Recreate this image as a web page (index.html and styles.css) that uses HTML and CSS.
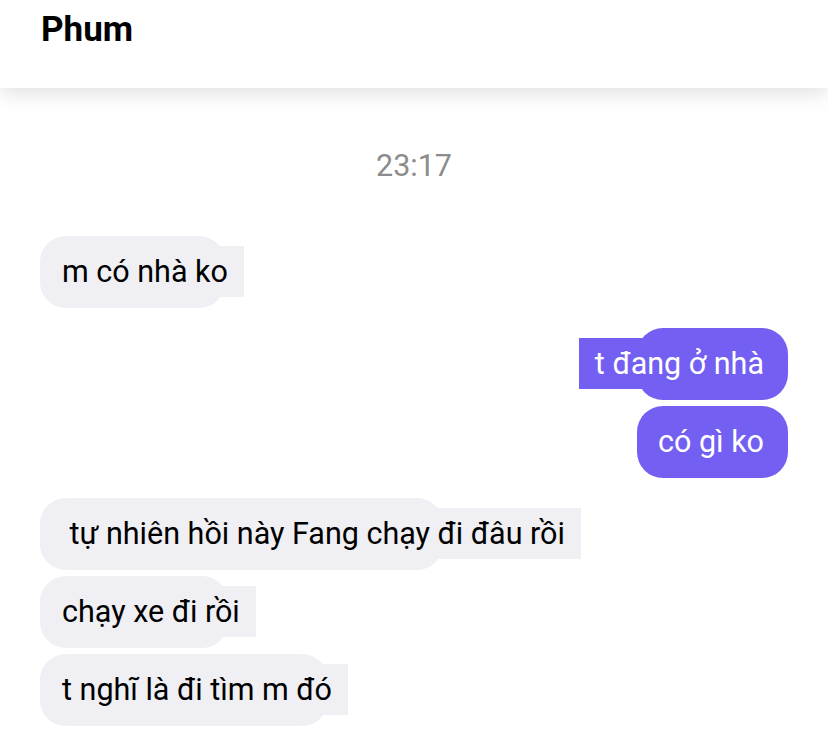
FILE: index.html
```html
<!DOCTYPE html>
<html lang="vi">
<head>
<meta charset="utf-8">
<title>Phum</title>
<link rel="stylesheet" href="styles.css">
</head>
<body>
<header class="topbar">
  <h1 class="title">Phum</h1>
</header>
<main class="chat">
  <div class="stamp">23:17</div>

  <div class="group incoming">
    <div class="bubble w185"><span class="txt">m có nhà ko</span></div>
  </div>

  <div class="group outgoing">
    <div class="bubble w151"><span class="txt">t đang ở nhà</span></div>
    <div class="bubble w151"><span class="txt">có gì ko</span></div>
  </div>

  <div class="group incoming">
    <div class="bubble w403"><span class="txt">&nbsp;tự nhiên hồi này Fang chạy đi đâu rồi</span></div>
    <div class="bubble w188"><span class="txt">chạy xe đi rồi</span></div>
    <div class="bubble w288"><span class="txt">t nghĩ là đi tìm m đó</span></div>
  </div>
</main>
</body>
</html>
```

FILE: styles.css
```css
* { box-sizing: border-box; }

html, body {
  margin: 0;
  padding: 0;
  background: #ffffff;
}

body {
  font-family: Roboto, "Noto Sans", "Liberation Sans", sans-serif;
  width: 828px;
  height: 748px;
  overflow: hidden;
}

.topbar {
  height: 88px;
  background: #ffffff;
  padding-left: 41px;
  box-shadow: 0 7px 18px rgba(0, 0, 0, 0.11);
  position: relative;
  z-index: 1;
  display: flex;
  align-items: flex-start;
}

.title {
  margin: 10px 0 0 0;
  font-family: Roboto, "Noto Sans", sans-serif;
  font-weight: 700;
  font-size: 35px;
  line-height: 40px;
  color: #000000;
}

.chat {
  padding: 0 40px;
  display: flex;
  flex-direction: column;
}

.stamp {
  margin-top: 60px;
  margin-bottom: 52px;
  text-align: center;
  font-size: 30.5px;
  line-height: 36px;
  color: #8c8c8c;
}

.group {
  display: flex;
  flex-direction: column;
  gap: 6px;
  margin-bottom: 20px;
}

.group.incoming { align-items: flex-start; }
.group.outgoing { align-items: flex-end; }

.bubble {
  height: 72px;
  border-radius: 26px;
  display: flex;
  align-items: center;
  flex-shrink: 0;
}

.txt {
  flex-shrink: 0;
  white-space: nowrap;
  height: 51px;
  line-height: 51px;
  padding: 0 16px;
  font-size: 30.5px;
  margin-top: -1px;
}

.incoming .bubble {
  background: #efeff4;
  justify-content: flex-start;
  padding-left: 6px;
}
.incoming .txt {
  background: #efeff4;
  color: #000000;
}

.outgoing .bubble {
  background: #7360f2;
  justify-content: flex-end;
  padding-right: 8px;
}
.outgoing .txt {
  background: #7360f2;
  color: #ffffff;
}

.w151 { width: 151px; }
.w185 { width: 185px; }
.w188 { width: 188px; }
.w288 { width: 288px; }
.w403 { width: 403px; }
```
